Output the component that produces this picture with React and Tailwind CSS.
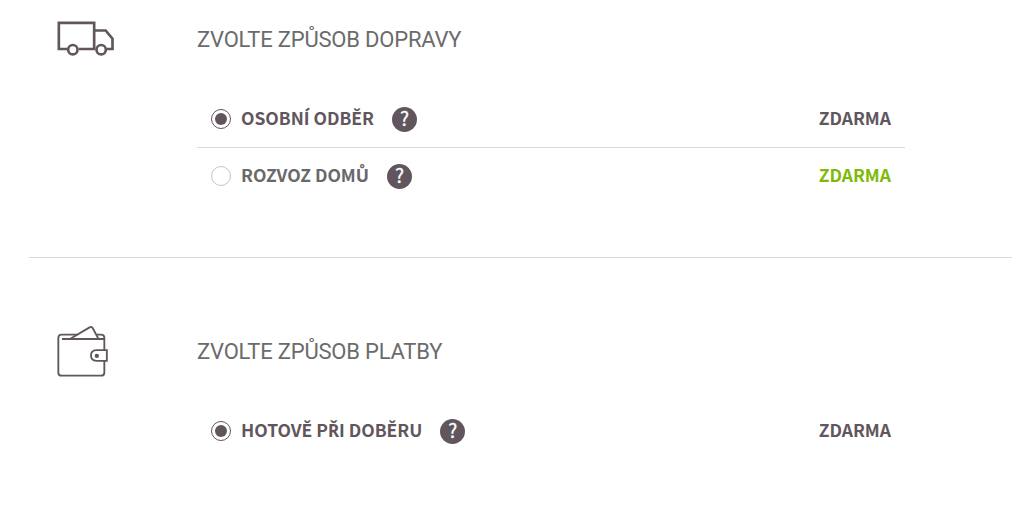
import React, { useState } from "react";
import clsx from "clsx";

function TruckIcon() {
  return (
    <svg width="58" height="38" viewBox="36 30 174 114" fill="none" stroke="#61565d" strokeWidth="8">
      <path d="M67 117H41.500V38.500H147.500V117M101 117H151" />
      <path d="M147.500 61.500H182L202.500 86V117H186" />
      <circle cx="83.500" cy="119" r="14" />
      <circle cx="168.500" cy="119" r="14" />
    </svg>
  );
}

function WalletIcon() {
  return (
    <svg width="52" height="53" viewBox="36 30 156 159" fill="none" stroke="#61565d" strokeWidth="5.500">
      <path d="M178 105V68Q178 59 168 59H155M98 59H50Q40 59 40 69V173Q40 182 50 182H168Q178 182 178 173V138" />
      <path d="M51 72H178" />
      <path d="M76 71L135 36.500Q140 34 143 39L160 71" />
      <path d="M185.500 105.500H154Q138 106 138 121.500T154 137.500H185.500Z" />
      <circle cx="155.500" cy="122.500" r="6.500" fill="#61565d" stroke="none" />
    </svg>
  );
}

function Label({ text }) {
  return text.split(/(Ř)/).map((part, i) =>
    part === "Ř" ? (
      <span key={i} className="font-['Noto_Sans',sans-serif] text-[17px] leading-none">{part}</span>
    ) : (
      part
    )
  );
}

function Option({ label, price, checked, free, onSelect }) {
  return (
    <div className="flex h-[57px] items-center px-3.5 font-['Noto_Sans_CJK_JP','Noto_Sans',sans-serif] text-[17.5px] font-bold leading-6">
      <button
        type="button"
        role="radio"
        aria-checked={checked}
        aria-label={label}
        onClick={onSelect}
        className={clsx(
          "mb-px flex size-5 items-center justify-center rounded-full border",
          checked ? "border-[#61565d]" : "border-[#c4c4c4]"
        )}
      >
        {checked && <span className="size-3 rounded-full bg-[#61565d]" />}
      </button>
      <span className={clsx("ml-2.5 whitespace-nowrap pb-[3px] tracking-[-0.02px]", checked ? "text-[#61565d]" : "text-[#696969]")}>
        <Label text={label} />
      </span>
      <span className="ml-[18px] flex size-[25px] items-center justify-center rounded-full bg-[#61565d] pb-[3px] text-[19px] font-normal text-white [-webkit-text-stroke:0.3px_white]">
        ?
      </span>
      <span className={clsx("ml-auto pb-[3px]", free ? "text-[#80ba09]" : "text-[#61565d]")}>{price}</span>
    </div>
  );
}

function Section({ icon, title, options }) {
  const [selected, setSelected] = useState(0);

  return (
    <div className="flex items-start pl-7">
      <div className="w-[140px] shrink-0">{icon}</div>
      <div className="w-[708px]">
        <h2 className="h-10 whitespace-nowrap font-[Roboto,sans-serif] text-[22px] font-normal leading-10 tracking-[-0.2px] text-[#6b6b6b]">{title}</h2>
        <div role="radiogroup" className="mt-[31px] divide-y divide-[#d8d8d8]">
          {options.map((o, i) => (
            <Option key={o.label} {...o} checked={selected === i} onSelect={() => setSelected(i)} />
          ))}
        </div>
      </div>
    </div>
  );
}

export default function App() {
  return (
    <div className="h-[506px] overflow-hidden bg-white pl-[29px]">
      <div className="h-[258px] border-b border-[#d8d8d8] pt-5">
        <Section
          icon={<TruckIcon />}
          title="ZVOLTE ZPŮSOB DOPRAVY"
          options={[
            { label: "OSOBNÍ ODBĚR", price: "ZDARMA" },
            { label: "ROZVOZ DOMŮ", price: "ZDARMA", free: true },
          ]}
        />
      </div>
      <div className="pt-[74px]">
        <Section
          icon={<div className="-mt-[7px]"><WalletIcon /></div>}
          title="ZVOLTE ZPŮSOB PLATBY"
          options={[{ label: "HOTOVĚ PŘI DOBĚRU", price: "ZDARMA" }]}
        />
      </div>
    </div>
  );
}
